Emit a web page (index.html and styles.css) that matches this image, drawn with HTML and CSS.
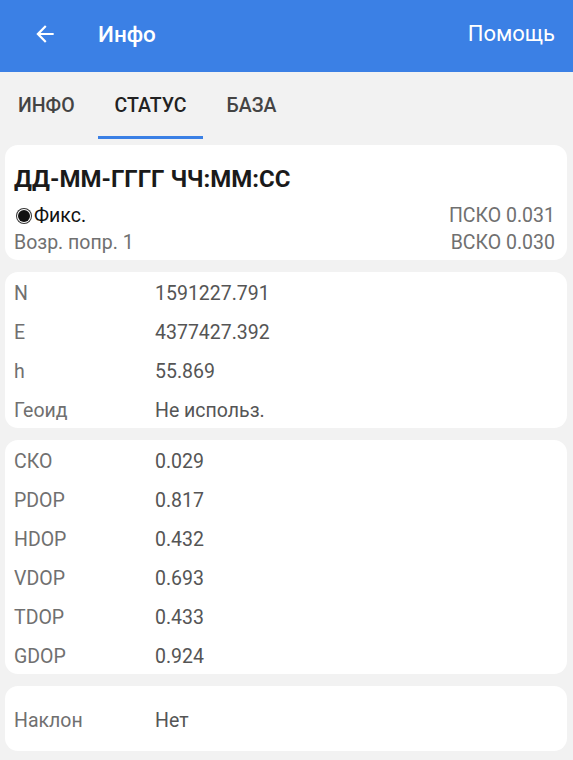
FILE: index.html
```html
<!DOCTYPE html>
<html lang="ru">
<head>
    <meta charset="UTF-8">
    <meta name="viewport" content="width=device-width, initial-scale=1.0">
    <title>Инфо</title>
    <link rel="stylesheet" href="styles.css">
</head>
<body>
<div class="topbar">
    <svg class="back" width="24" height="24" viewBox="0 0 24 24">
        <path d="M20 11H7.83l5.59-5.59L12 4l-8 8 8 8 1.41-1.41L7.83 13H20v-2z" fill="#fff"/>
    </svg>
    <div class="title">Инфо</div>
    <div class="help">Помощь</div>
</div>

<div class="tabs">
    <div class="tab">ИНФО</div>
    <div class="tab active">СТАТУС</div>
    <div class="tab">БАЗА</div>
</div>

<div class="content">
    <div class="card head-card">
        <div class="datetime">ДД-ММ-ГГГГ ЧЧ:ММ:СС</div>
        <div class="line">
            <div class="fix"><span class="dot"></span>Фикс.</div>
            <div class="muted">ПСКО 0.031</div>
        </div>
        <div class="line">
            <div class="muted">Возр. попр. 1</div>
            <div class="muted">ВСКО 0.030</div>
        </div>
    </div>

    <div class="card list">
        <div class="row"><span class="label">N</span><span class="value">1591227.791</span></div>
        <div class="row"><span class="label">E</span><span class="value">4377427.392</span></div>
        <div class="row"><span class="label">h</span><span class="value">55.869</span></div>
        <div class="row"><span class="label">Геоид</span><span class="value">Не использ.</span></div>
    </div>

    <div class="card list">
        <div class="row"><span class="label">СКО</span><span class="value">0.029</span></div>
        <div class="row"><span class="label">PDOP</span><span class="value">0.817</span></div>
        <div class="row"><span class="label">HDOP</span><span class="value">0.432</span></div>
        <div class="row"><span class="label">VDOP</span><span class="value">0.693</span></div>
        <div class="row"><span class="label">TDOP</span><span class="value">0.433</span></div>
        <div class="row"><span class="label">GDOP</span><span class="value">0.924</span></div>
    </div>

    <div class="card list tilt">
        <div class="row"><span class="label">Наклон</span><span class="value">Нет</span></div>
    </div>
</div>
</body>
</html>
```

FILE: styles.css
```css
body {
    margin: 0;
    font-family: Roboto, "Noto Sans", sans-serif;
    background-color: #f2f2f2;
    color: #222;
}
.topbar {
    display: flex;
    align-items: center;
    height: 72px;
    padding: 0 18px 5px 32px;
    box-sizing: border-box;
    background-color: #3b80e5;
    color: #fff;
}
.back {
    width: 26px;
    height: 26px;
}
.title {
    margin-left: 40px;
    font-size: 22.5px;
    font-weight: 500;
}
.help {
    margin-left: auto;
    font-size: 22px;
}
.tabs {
    display: flex;
    height: 68px;
    padding-left: 1px;
}
.tab {
    display: flex;
    align-items: center;
    padding: 3px 17px 0;
    font-size: 19.5px;
    font-weight: 500;
    color: #444;
    border-bottom: 3px solid transparent;
    box-sizing: border-box;
    height: 67px;
}
.tab.active {
    color: #222;
    border-bottom-color: #3b80e5;
    margin: 0 6px 0 6px;
}
.content {
    display: flex;
    flex-direction: column;
    gap: 12px;
    padding: 5px 6px 8px 5px;
}
.card {
    background-color: #fff;
    border-radius: 13px;
}
.head-card {
    padding: 20px 12px 4px 9px;
}
.datetime {
    font-size: 24px;
    font-weight: 700;
    color: #1a1a1a;
    margin-bottom: 9px;
}
.line {
    display: flex;
    justify-content: space-between;
    align-items: center;
    font-size: 19.5px;
    line-height: 27px;
}
.fix {
    display: flex;
    align-items: center;
    color: #111;
}
.dot {
    width: 12px;
    height: 12px;
    margin: 0 4px 0 4px;
    border-radius: 50%;
    background-color: #111;
    box-shadow: 0 0 0 1px #fff, 0 0 0 2px #333;
}
.muted {
    color: #707070;
}
.list {
    padding: 0 0 0 9px;
}
.row {
    display: flex;
    height: 39px;
    padding-top: 3px;
    box-sizing: border-box;
    align-items: center;
    font-size: 19.5px;
}
.label {
    width: 141px;
    color: #707070;
}
.value {
    color: #555;
}
.tilt {
    padding: 13px 0 13px 9px;
}
```
